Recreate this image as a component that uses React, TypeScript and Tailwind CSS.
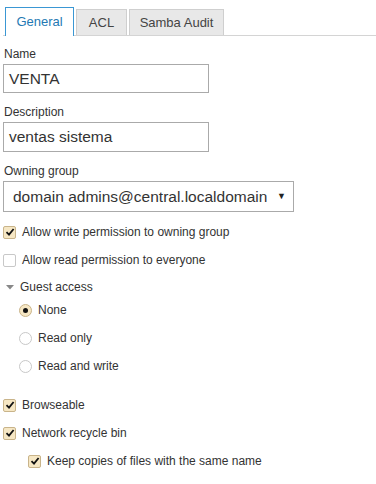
import React from "react";

function Check({ checked }: { checked: boolean }) {
  return checked ? (
    <span className="flex h-[13px] w-[13px] items-center justify-center rounded-[2px] border border-[#c9b48a] bg-[#f6e7c4]">
      <svg width="10" height="10" viewBox="0 0 10 10">
        <path d="M1.5 5.2 L4 7.6 L8.6 2" fill="none" stroke="#111" strokeWidth="1.8" />
      </svg>
    </span>
  ) : (
    <span className="block h-[13px] w-[13px] rounded-[2px] border border-[#c8c8c8] bg-white" />
  );
}

function Radio({ checked }: { checked: boolean }) {
  return checked ? (
    <span className="flex h-[13px] w-[13px] items-center justify-center rounded-full border border-[#c9b48a] bg-[#f6e7c4]">
      <span className="block h-[5px] w-[5px] rounded-full bg-[#111]" />
    </span>
  ) : (
    <span className="block h-[13px] w-[13px] rounded-full border border-[#c8c8c8] bg-white" />
  );
}

function CheckRow({ checked, label, indent = false }: { checked: boolean; label: string; indent?: boolean }) {
  return (
    <div className={`flex h-[28px] items-center gap-[6px] ${indent ? "pl-[28px]" : "pl-[3px]"}`}>
      <Check checked={checked} />
      <span className="text-[12px]">{label}</span>
    </div>
  );
}

function RadioRow({ checked, label }: { checked: boolean; label: string }) {
  return (
    <div className="flex h-[28px] items-center gap-[6px] pl-[19px]">
      <Radio checked={checked} />
      <span className="text-[12px]">{label}</span>
    </div>
  );
}

export default function App() {
  return (
    <div className="h-[484px] w-[376px] bg-white text-[#333]" style={{ fontFamily: '"Liberation Sans", Arial, sans-serif' }}>
      <div className="ml-[3px] flex items-end border-b border-[#d4d4d4] pl-[2px] pt-[7px]">
        <div className="-mb-px flex h-[29px] w-[69px] items-center justify-center border border-b-0 border-[#3a97d4] bg-white text-[13px] text-[#2479b3]">
          General
        </div>
        <div className="ml-[2px] flex h-[26px] w-[51px] items-center justify-center border border-b-0 border-[#cfcfcf] bg-[#e8e8e8] text-[13px] text-[#444]">
          ACL
        </div>
        <div className="ml-[2px] flex h-[26px] w-[95px] items-center justify-center border border-b-0 border-[#cfcfcf] bg-[#e8e8e8] text-[13px] text-[#444]">
          Samba Audit
        </div>
      </div>

      <div className="pl-[3px]">
        <div className="mt-[10px] h-[17px] pl-[1px] text-[12px] leading-[17px]">Name</div>
        <div className="mt-[1px] flex h-[29px] w-[206px] items-center border border-[#aaa] pl-[5px] text-[15.5px]">VENTA</div>

        <div className="mt-[11px] h-[17px] pl-[1px] text-[12px] leading-[17px]">Description</div>
        <div className="mt-[1px] flex h-[30px] w-[206px] items-center border border-[#aaa] pl-[5px] text-[15.5px]">ventas sistema</div>

        <div className="mt-[11px] h-[17px] pl-[1px] text-[12px] leading-[17px]">Owning group</div>
        <div className="mt-[1px] flex h-[31px] w-[291px] items-center justify-between border border-[#aaa] pl-[9px] pr-[7px] text-[15.5px]">
          <span>domain admins@central.localdomain</span>
          <span className="text-[9px] text-[#222]">▼</span>
        </div>
      </div>

      <div className="mt-[6px]">
        <CheckRow checked label="Allow write permission to owning group" />
        <CheckRow checked={false} label="Allow read permission to everyone" />
        <div className="flex h-[26px] items-center gap-[6px] pl-[6px]">
          <svg width="8" height="5" viewBox="0 0 8 5">
            <path d="M0 0 L8 0 L4 4.5 Z" fill="#888" />
          </svg>
          <span className="text-[12px]">Guest access</span>
        </div>
        <div className="-mt-[4px]">
          <RadioRow checked label="None" />
          <RadioRow checked={false} label="Read only" />
          <RadioRow checked={false} label="Read and write" />
        </div>
        <div className="mt-[11px]">
          <CheckRow checked label="Browseable" />
          <CheckRow checked label="Network recycle bin" />
          <CheckRow checked indent label="Keep copies of files with the same name" />
        </div>
      </div>
    </div>
  );
}
